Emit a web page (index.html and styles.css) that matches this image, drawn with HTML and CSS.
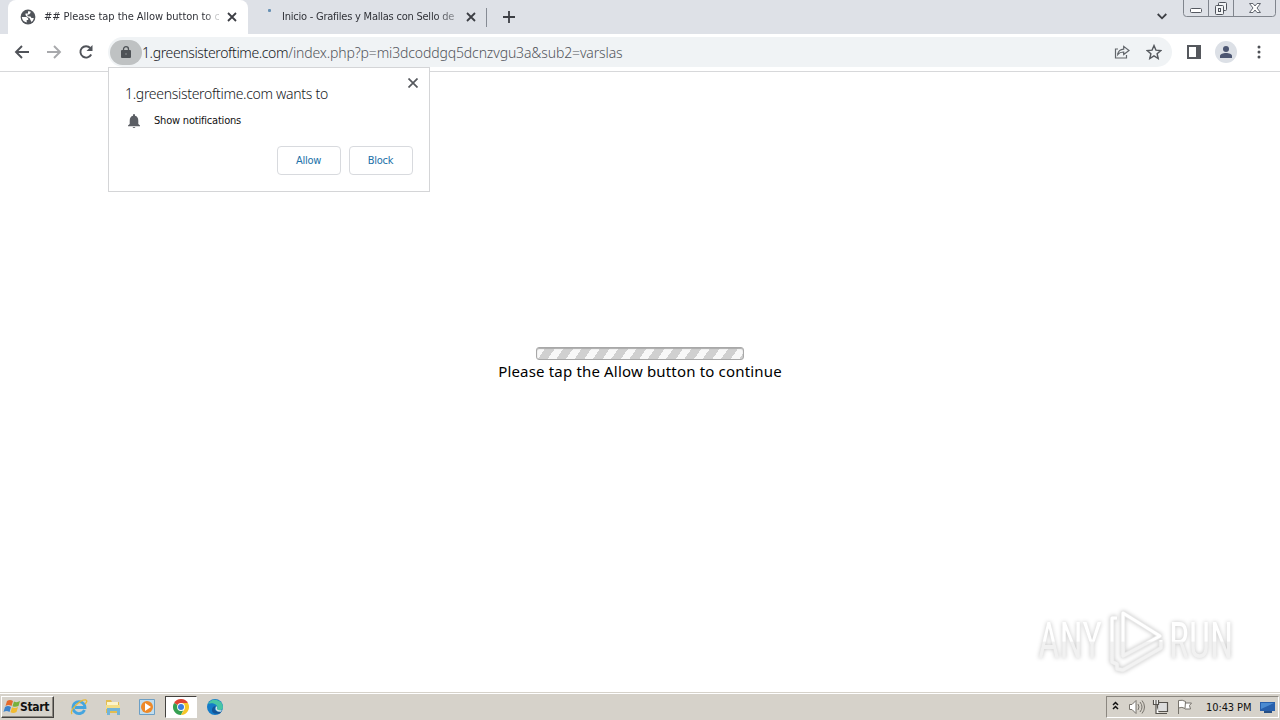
FILE: index.html
```html
<!DOCTYPE html>
<html lang="en">
<head>
<meta charset="utf-8">
<title>## Please tap the Allow button to continue</title>
<link rel="stylesheet" href="styles.css">
</head>
<body>
<div class="screen">
  <header class="tabstrip">
    <div class="tab tab-active">
      <svg class="globe" viewBox="0 0 16 16" width="16" height="16"><circle cx="8" cy="8" r="7.400" fill="#50545a"/><path d="M1.800 8h4.700l1.700 1.500v1.400H6.700v2.600C4 13 2 11 1.800 8ZM8 2.200 10.500 2.500v1.600L9 5.500H7.500v1.700l3 .3 1 1.600h2.300C13.500 11 12.500 12.500 11.500 13L9.500 9 7 8 5.500 6V4.500H8Z" fill="#fff"/></svg>
      <span class="tab-title title-one">## Please tap the Allow button to c</span>
      <svg class="close" viewBox="0 0 10 10" width="10" height="10"><path d="m1 1 8 8M9 1 1 9"/></svg>
    </div>
    <div class="tab tab-idle">
      <span class="spinner"></span>
      <span class="tab-title title-two">Inicio - Grafiles y Mallas con Sello de</span>
      <svg class="close" viewBox="0 0 10 10" width="10" height="10"><path d="m1 1 8 8M9 1 1 9"/></svg>
    </div>
    <svg class="plus" viewBox="0 0 12 12" width="12" height="12"><path d="M6 0v12M0 6h12"/></svg>
    <svg class="chevron" viewBox="0 0 10 7" width="10" height="7"><path d="m.7 1 4.300 4.300L9.300 1"/></svg>
    <svg class="winctl" viewBox="0 0 94 18" width="94" height="18"><path d="M.5 0v13.500q0 3 3 3h86q3 0 3-3V0M25.500 0v16M50.500 0v16" fill="none" stroke="#80858d"/><rect x="7.500" y="8.500" width="11" height="4" rx="1" fill="#fff" stroke="#555961"/><g fill="#f2f4f6" stroke="#50545c"><rect x="35.500" y="2.500" width="8" height="8" rx="1"/><rect x="32.500" y="5.500" width="8" height="9" rx="1"/><rect x="35.500" y="8.500" width="2" height="3"/></g><path d="m66.500 3.500h3.500l2 2.500 2-2.500h3.500l-3.500 4.500 3.500 4.500h-3.500l-2-2.500-2 2.500h-3.500l3.500-4.500Z" fill="#fff" stroke="#626770"/></svg>
  </header>
  <nav class="toolbar">
    <svg class="nav back" viewBox="0 0 16 16" width="16" height="16"><path d="M15 8H2M8 2 2 8l6 6"/></svg>
    <svg class="nav forward" viewBox="0 0 16 16" width="16" height="16"><path d="M1 8h13M8 2l6 6-6 6"/></svg>
    <svg class="nav reload" viewBox="0 0 16 16" width="16" height="16"><path d="M13.200 10.500A5.700 5.700 0 1 1 12.300 4"/><path d="M14.500 1v6h-6Z" fill="#50545a" stroke="none"/></svg>
    <div class="omnibox">
      <span class="lockpill"><svg viewBox="0 0 10 12" width="10" height="12"><path d="M2.500 5V3.200a2.500 2.500 0 0 1 5 0V5" fill="none" stroke="#4e5256" stroke-width="1.300"/><rect y="4" width="10" height="8" rx="1" fill="#4e5256"/><circle cx="5" cy="8" r="1" fill="#777b7e"/></svg></span>
      <span class="url"><span class="host">1.greensisteroftime.com</span><span class="path">/index.php?p=mi3dcoddgq5dcnzvgu3a&amp;sub2=varslas</span></span>
      <svg class="share" viewBox="0 0 16 16" width="16" height="16"><path d="M4 5H1.500v9h11v-3M3.700 10.500c.5-3.700 2.500-5.200 6-5.400V2.400L15 6.600l-5.300 4V8c-2.900-.1-4.500.7-6 2.500Z" fill="none" stroke="#62666b" stroke-width="1.200"/></svg>
      <svg class="star" viewBox="0 0 16 16" width="16" height="16"><path d="m8 1.600 1.900 4.500 4.900.4-3.700 3.200 1.100 4.800L8 11.900l-4.200 2.600 1.100-4.800L1.200 6.500l4.900-.4Z" fill="none" stroke="#55595e" stroke-width="1.400"/></svg>
    </div>
    <svg class="panel" viewBox="0 0 14 14" width="14" height="14"><path d="M1 1h12v12H1Z" fill="#fff" stroke="#55585d" stroke-width="2"/><path d="M9 0h5v14H9Z" fill="#55585d"/></svg>
    <svg class="avatar" viewBox="0 0 22 22" width="22" height="22"><circle cx="11" cy="11" r="11" fill="#dce0e6"/><circle cx="11" cy="8" r="3" fill="#4c5672"/><path d="M5 17v-2c0-4 12-4 12 0v2Z" fill="#4c5672"/></svg>
    <svg class="dots" viewBox="0 0 4 14" width="4" height="14"><circle cx="2" cy="2" r="1.500"/><circle cx="2" cy="7" r="1.500"/><circle cx="2" cy="12" r="1.500"/></svg>
  </nav>
  <main class="page">
    <div class="loader"></div>
    <p class="message"><span>Please tap the Allow button to continue</span></p>
    <div class="watermark">
      <span class="wm-any">ANY</span>
      <svg viewBox="0 0 60 66" width="60" height="66"><defs><linearGradient id="fade" gradientUnits="userSpaceOnUse" x1="0" y1="0" x2="0" y2="66"><stop offset=".5" stop-color="#fff"/><stop offset=".52" stop-color="#f2f2f2"/></linearGradient></defs><g fill="none" stroke-linejoin="round"><path d="M18 5v43l37-20ZM12 10H7v44l5 2v5l6 1 38-22v-8" stroke="#e9e9e9" stroke-width="4.500"/><path d="M18 5v43l37-20ZM12 10H7v44l5 2v5l6 1 38-22v-8" stroke="url(#fade)" stroke-width="3"/></g></svg>
      <span class="wm-run">RUN</span>
    </div>
  </main>
  <footer class="taskbar">
    <div class="start">
      <svg viewBox="0 0 18 16" width="18" height="16"><path d="M4 2q3-2 6 0L8.500 7q-3-2-6 0Z" fill="#e56a2c"/><path d="M11 2.500q3 1.500 6-.5L15.500 7q-3 1.500-6 .3Z" fill="#78b13c"/><path d="M2 8q3-2 6 0l-1.500 5q-3-2-6 0Z" fill="#3d83cc"/><path d="M9 8.300q3 1.700 6-.3l-1.500 5q-3 2-6 .3Z" fill="#f2bb30"/></svg>
      <span>Start</span>
    </div>
    <div class="quick">
      <svg viewBox="0 0 18 18" width="18" height="18"><path d="M14.500 12A6 6 0 1 1 15 9.500H5" fill="none" stroke="#45a5df" stroke-width="2.800"/><path d="M2 16C-1 12 11 1 16 2q2 1-1 4" fill="none" stroke="#e8b936" stroke-width="1.300"/></svg>
      <svg viewBox="0 0 18 18" width="18" height="18"><path d="M2 2h5l1 2h7v11H2Z" fill="#e3bd50"/><path d="M3 4h11v5H3Z" fill="#fbf4ca"/><path d="M2 7h14v4H2Z" fill="#f3de87"/><path d="M3 17v-7h13v7h-3v-4H6v4Z" fill="#72b4d8"/></svg>
      <svg viewBox="0 0 18 18" width="18" height="18"><path d="M1.500 1.500h15v15h-15Z" fill="#c1ddee" stroke="#6c9fc5"/><circle cx="9" cy="9" r="6" fill="#ee8928"/><path d="m7 5 6 4-6 4Z" fill="#fff"/></svg>
      <div class="running"><svg viewBox="0 0 16 16" width="16" height="16"><path d="M8 8 1.070 4A8 8 0 0 1 14.930 4Z" fill="#df4433"/><path d="M1.070 4 8 8l3 2-3 6A8 8 0 0 1 1.070 4Z" fill="#36a052"/><path d="M8 4h6.930A8 8 0 0 1 8 16L11.400 10Z" fill="#f6c629"/><circle cx="8" cy="8" r="3.900" fill="#fff"/><circle cx="8" cy="8" r="3" fill="#3b7de0"/></svg></div>
      <svg viewBox="0 0 18 18" width="18" height="18"><circle cx="9" cy="9" r="8" fill="#147bc8"/><path d="M2 6a8 8 0 0 1 15 3c0 4-5 4-6 2 2-4-4-7-9-5Z" fill="#48c5a5"/><path d="M10 8q-3 4 1 5.500 3 1 5-1l-2 3Q5 17 6 11q1-3 4-3Z" fill="#155496"/><path d="M10 8q2 1 .8 3 2.200 2 5 1l-1 1.800Q8 14 10 8Z" fill="#d9e8e6"/></svg>
    </div>
    <div class="tray">
      <svg class="tray-up" viewBox="0 0 7 9" width="7" height="9"><path d="m1 4 2.500-2.500L6 4M1 8l2.500-2.500L6 8" fill="none" stroke="#111" stroke-width="1.500"/></svg>
      <svg class="speaker" viewBox="0 0 18 16" width="18" height="16"><path d="M1.500 5.500H4l4-4v13l-4-4H1.500Z" fill="#fff" stroke="#77736c"/><path d="M10 5q2 3 0 6M12 3q4 5 0 10M14 1.500q5 6.500 0 13" fill="none" stroke="#77736c"/></svg>
      <svg class="network" viewBox="0 0 17 16" width="17" height="16"><path d="M5.500 3.500h10v9h-10ZM7 14.500h8" fill="#ddd" stroke="#55524d" stroke-width="1.200"/><path d="M1.500 1v4.500h5V1M4 1v4M4 5.500v9h3" fill="#fff" stroke="#55524d" stroke-width="1.200"/></svg>
      <svg class="flag" viewBox="0 0 17 16" width="17" height="16"><path d="M2.500 15V1.500q4-1 7 1l-.5 7q-3-2-6.500-.5M9 4h6.500l-2 2.500 1 3.500H9" fill="#fff" stroke="#77736c"/></svg>
      <span class="clock">10:43 PM</span>
      <svg class="desktop" viewBox="0 0 15 13" width="15" height="13"><path d="M0 1h15v9H0Z" fill="#2860ac"/><path d="M1 2h13L1 8Z" fill="#4b8bd1"/><path d="M4 10h8v2H4Z" fill="#274f84"/></svg>
    </div>
  </footer>
  <section class="prompt">
    <svg class="prompt-close" viewBox="0 0 10 10" width="10" height="10"><path d="m.5.5 9 9m0-9-9 9"/></svg>
    <h1><span>1.greensisteroftime.com wants to</span></h1>
    <div class="permission">
      <svg viewBox="0 0 12 14" width="12" height="14"><path d="M5 1a1 1 0 0 1 2 0v.7q3.300.8 3.300 5V10l1.700 1.500v.7H0v-.7L1.700 10V6.700Q1.700 2.500 5 1.700ZM4.500 13h3q-1.500 2-3 0Z" fill="#5b5e64"/></svg>
      <span>Show notifications</span>
    </div>
    <div class="actions"><button><span>Allow</span></button><button><span>Block</span></button></div>
  </section>
</div>
</body>
</html>
```

FILE: styles.css
```css
* { box-sizing: border-box; }
body { margin: 0; font-family: "DejaVu Sans Condensed", "DejaVu Sans", sans-serif; font-stretch: condensed; color: #111; }
svg { display: block; flex: none; }
.screen { width: 1280px; height: 720px; position: relative; display: flex; flex-direction: column; overflow: hidden; background: #fff; }
.tabstrip { height: 34px; flex: none; background: #dee1e7; display: flex; align-items: flex-start; }
.tab { height: 34px; display: flex; align-items: center; }
.tab-active { width: 240px; margin-left: 8px; padding-left: 12px; background: #fff; border-radius: 8px 8px 0 0; }
.tab-idle { width: 239px; padding-left: 19px; position: relative; }
.tab-idle::after { content: ""; position: absolute; right: 0; top: 8px; width: 1px; height: 19px; background: #868b94; }
.tab-title { font-size: 11px; white-space: nowrap; line-height: 18px; color: #303238; }
.title-one { width: 175px; margin-left: 8px; margin-right: 8px; letter-spacing: -.05px; -webkit-mask-image: linear-gradient(90deg, #000 92%, #0004 98%); }
.title-two { width: 174px; margin-left: 12px; margin-right: 10px; letter-spacing: -.23px; -webkit-mask-image: linear-gradient(90deg, #000 88%, #0006); }
.close, .plus, .chevron { fill: none; stroke: #3c3e44; stroke-width: 1.8; }
.spinner { width: 3px; height: 3px; background: #6790b4; align-self: flex-start; margin: 9px 0 0 1px; border-radius: 1px; }
.spinner + .title-two { margin-left: 11px; }
.plus { margin: 11px 0 0 16px; }
.chevron { margin: 13px 16px 0 auto; }
.winctl { margin-right: 3px; }
.toolbar { height: 38px; flex: none; border-bottom: 1px solid #d7d8da; display: flex; align-items: center; padding: 0 19px 1px 14px; }
.nav { fill: none; stroke: #505359; stroke-width: 1.9; margin-right: 16px; }
.forward { stroke: #a8a9ac; }
.omnibox { flex: 1; height: 30px; margin-left: -2px; border-radius: 15px; background: #f0f3f5; display: flex; align-items: center; }
.lockpill { width: 32px; height: 25px; margin-left: 2px; border-radius: 13px; background: #bfc2c3; display: flex; align-items: center; justify-content: center; }
.url { width: 484px; margin-left: 0; padding-top: 1px; white-space: nowrap; font-family: "Noto Sans", sans-serif; font-stretch: normal; font-size: 14px; line-height: 20px; font-weight: 300; }
.host { color: #16181c; letter-spacing: -.37px; }
.path { color: #52555b; letter-spacing: -.13px; }
.share { margin-left: auto; }
.star { margin: 0 10px 0 16px; }
.panel { margin-left: 15px; }
.avatar { margin-left: 14px; }
.dots { margin-left: 20px; fill: #4d5055; }
.page { flex: 1; position: relative; display: flex; flex-direction: column; align-items: center; padding-top: 275px; }
.loader { width: 208px; height: 13px; border: 1px solid #a8a8a8; border-radius: 3px; background: repeating-linear-gradient(125deg, #f8f8f8 0 7px, #d0d0d0 7px 15px); box-shadow: inset 0 1px 1px #aaa; }
.message { margin: 0; height: 22px; font: 15px/23px "Noto Sans", sans-serif; white-space: nowrap; letter-spacing: .17px; color: #000; }
.watermark { position: absolute; left: 1038px; top: 536px; display: flex; align-items: center; font-family: Roboto, sans-serif; font-weight: 400; font-size: 50px; filter: drop-shadow(0 0 2px #c4c4c4); }
.wm-any, .wm-run { line-height: 64px; width: 89px; transform: scaleX(.75); transform-origin: left; background: linear-gradient(#fff 50%, #f1f1f1 52%); -webkit-background-clip: text; color: transparent; }
.watermark svg { margin-left: -22px; }
.wm-run { width: 96px; margin-left: 4px; }
.taskbar { height: 28px; flex: none; background: #d6d2ca; border-top: 1px solid #d6d2ca; box-shadow: inset 0 1px #fff; display: flex; padding: 3px 1px 2px 1px; }
.start { width: 53px; height: 22px; background: #d6d2ca; border: 1px solid; border-color: #fff #44423f #44423f #fff; box-shadow: inset -1px -1px #8b8780; display: flex; align-items: center; font-size: 12px; font-weight: 700; }
.start svg { margin: 0 -1px 0 1px; }
.start span { letter-spacing: -.3px; }
.quick { display: flex; align-items: center; margin-left: 16px; }
.quick > svg { margin-right: 16px; }
.running { width: 32px; height: 22px; margin: 0 9px 0 -7px; border: 1px solid; border-color: #44423f #fff #fff #44423f; background: #fff; display: flex; align-items: center; justify-content: center; }
.tray { width: 173px; height: 22px; margin-left: auto; border: 1px solid; border-color: #8b8780 #fff #fff #8b8780; display: flex; align-items: center; }
.tray-up { margin: 0 0 3px 5px; }
.speaker { margin-left: 9px; }
.network { margin-left: 6px; }
.flag { margin-left: 7px; }
.clock { font-size: 11px; width: 46px; margin-left: 13px; white-space: nowrap; letter-spacing: -.1px; }
.desktop { margin-left: 8px; }
.prompt { position: absolute; left: 108px; top: 67px; width: 322px; height: 125px; border: 1px solid #d4d5d7; background: #fff; padding: 16px 16px; display: flex; flex-direction: column; }
.prompt-close { position: absolute; right: 11px; top: 10px; fill: none; stroke: #56595e; stroke-width: 1.7; }
.prompt h1 { margin: 0; font: 300 14px/19px "Noto Sans", sans-serif; white-space: nowrap; color: #16181c; letter-spacing: -.3px; }
.permission { display: flex; align-items: center; height: 18px; margin: 8px 0 0 3px; font-size: 11px; }
.permission svg { margin-top: 1px; }
.permission span { margin-left: 14px; padding-top: 1px; line-height: 18px; letter-spacing: -.2px; }
.actions { display: flex; justify-content: flex-end; gap: 8px; margin-top: 17px; }
.actions button { width: 64px; height: 29px; padding: 0 1px 0 0; border: 1px solid #d8dade; border-radius: 4px; background: #fff; color: #2071a8; font-family: inherit; font-stretch: condensed; font-size: 11px; letter-spacing: -.3px; }
```
